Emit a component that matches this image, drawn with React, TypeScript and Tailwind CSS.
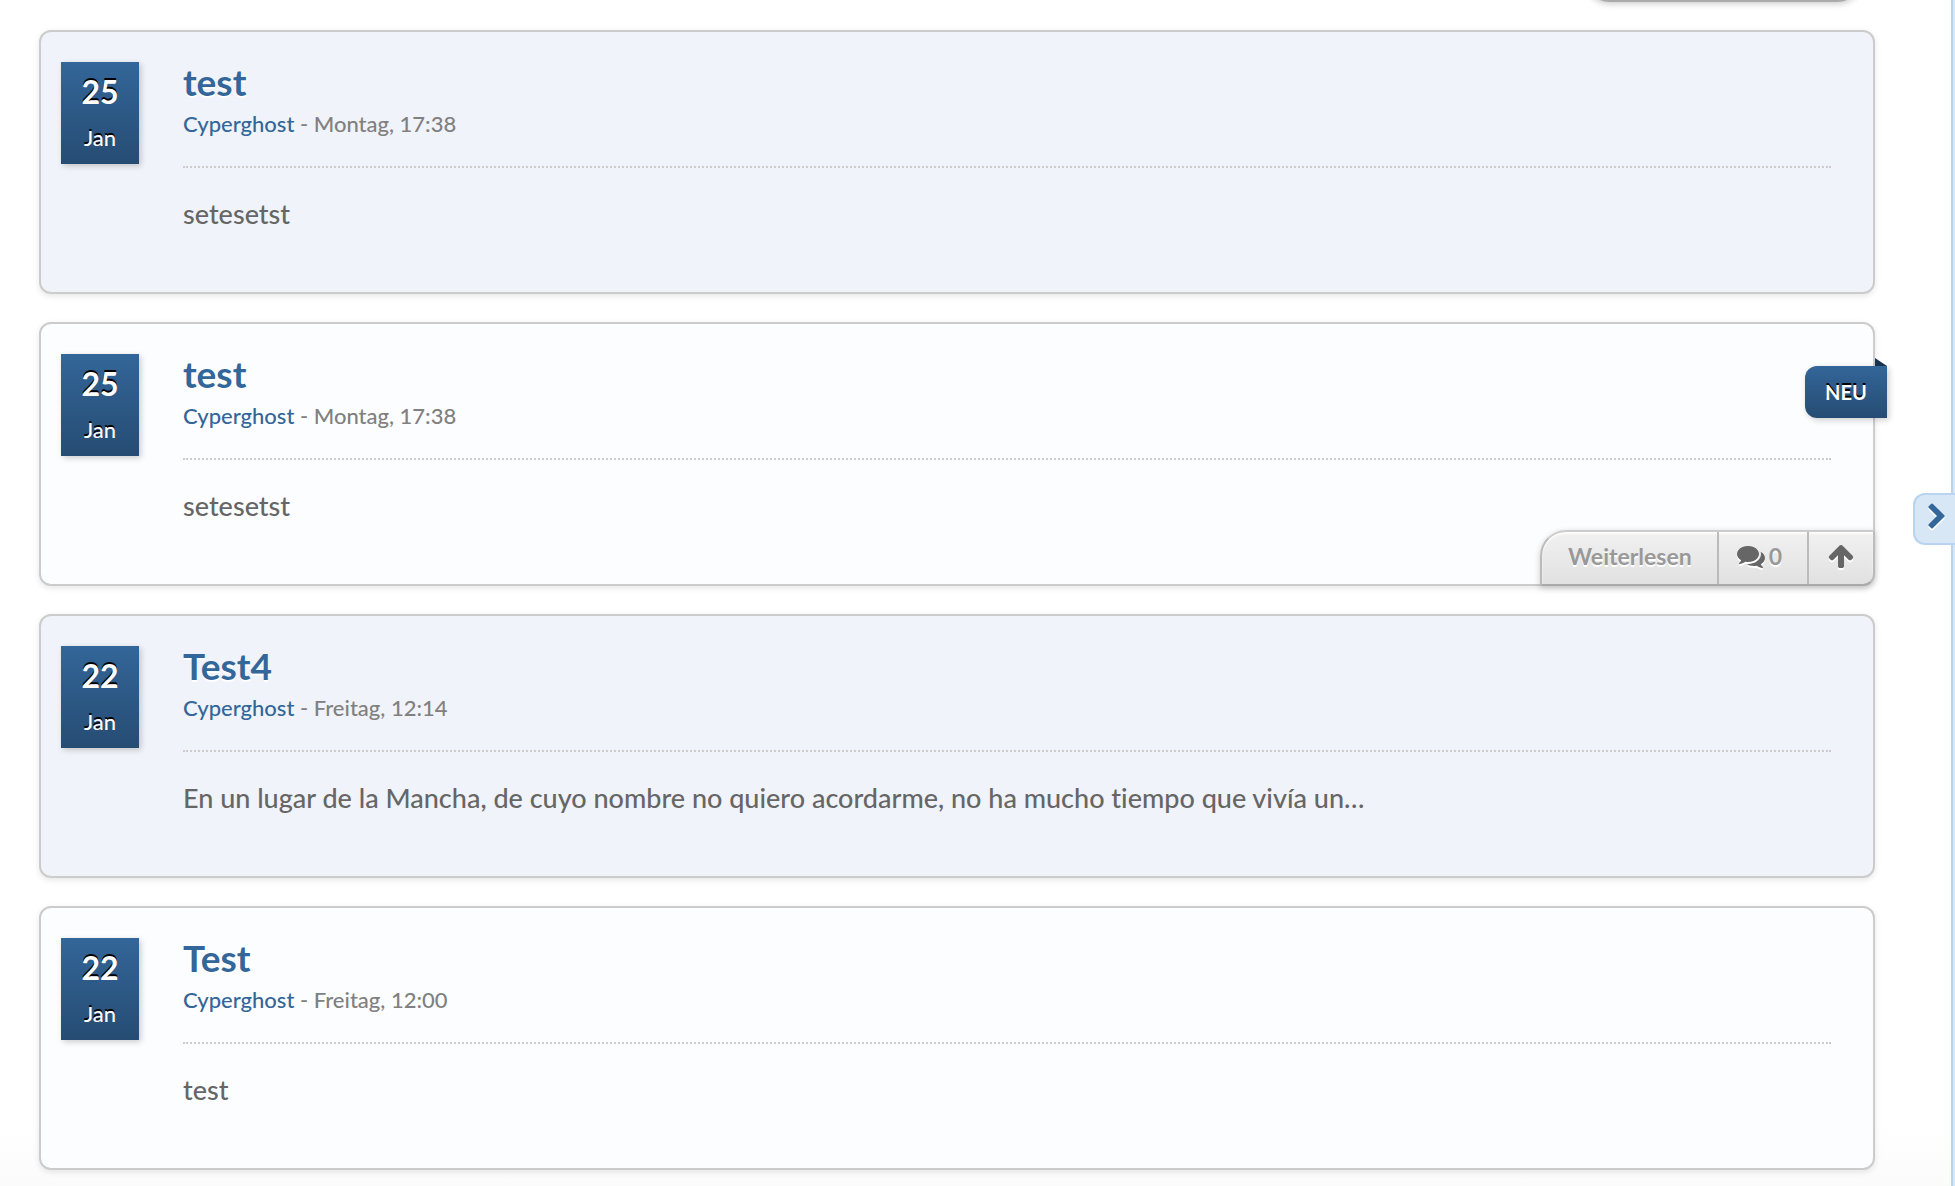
import type { ReactNode } from "react";

type Post = {
  id: number;
  day: string;
  month: string;
  title: string;
  author: string;
  date: string;
  text: string;
  isNew?: boolean;
};

const posts: Post[] = [
  { id: 1, day: "25", month: "Jan", title: "test", author: "Cyperghost", date: "Montag, 17:38", text: "setesetst" },
  { id: 2, day: "25", month: "Jan", title: "test", author: "Cyperghost", date: "Montag, 17:38", text: "setesetst", isNew: true },
  {
    id: 3,
    day: "22",
    month: "Jan",
    title: "Test4",
    author: "Cyperghost",
    date: "Freitag, 12:14",
    text: "En un lugar de la Mancha, de cuyo nombre no quiero acordarme, no ha mucho tiempo que vivía un…",
  },
  { id: 4, day: "22", month: "Jan", title: "Test", author: "Cyperghost", date: "Freitag, 12:00", text: "test" },
];

function Icon({ children }: { children: ReactNode }) {
  return (
    <svg
      viewBox="0 0 1792 1792"
      className="size-7 shrink-0 fill-current drop-shadow-[0_2px_0_#ffffff]"
      aria-hidden="true"
    >
      {children}
    </svg>
  );
}

function CommentsIcon() {
  return (
    <Icon>
      <path d="M1408 768q0 139-94 257t-256.5 186.5-353.5 68.5q-86 0-176-16-124 88-278 128-36 9-86 16h-3q-11 0-20.5-8t-11.5-21q-1-3-1-6.5t.5-6.5 2-6l2.5-5 3.5-5.5 4-5 4.5-5 4-4.5q5-6 23-25t26-29.5 22.5-29 25-38.5 20.5-44q-124-72-195-177t-71-224q0-139 94-257t256.5-186.5 353.5-68.5 353.5 68.5 256.5 186.5 94 257zm384 256q0 120-71 224.5t-195 176.5q10 24 20.5 44t25 38.5 22.5 29 26 29.5 23 25q1 1 4 4.5t4.5 5 4 5 3.5 5.5l2.5 5 2 6 .5 6.5-1 6.5q-3 14-13 22t-22 7q-50-7-86-16-154-40-278-128-90 16-176 16-271 0-472-132 58 4 88 4 161 0 309-45t264-129q125-92 192-212t67-254q0-77-23-152 129 71 204 178t75 230z" />
    </Icon>
  );
}

function ArrowUpIcon() {
  return (
    <Icon>
      <path d="M1675 971q0 51-37 90l-75 75q-38 38-91 38-54 0-90-38l-294-293v704q0 52-37.5 84.5t-90.5 32.5h-128q-53 0-90.5-32.5t-37.5-84.5v-704l-294 293q-36 38-90 38t-90-38l-75-75q-38-38-38-90 0-53 38-91l651-651q35-37 90-37 54 0 91 37l651 651q37 39 37 91z" />
    </Icon>
  );
}

function ChevronRightIcon() {
  return (
    <Icon>
      <path d="M1363 877l-742 742q-19 19-45 19t-45-19l-166-166q-19-19-19-45t19-45l531-531-531-531q-19-19-19-45t19-45l166-166q19-19 45-19t45 19l742 742q19 19 19 45t-19 45z" />
    </Icon>
  );
}

function DateBox({ day, month }: { day: string; month: string }) {
  return (
    <time className="flex h-[102px] w-[78px] shrink-0 flex-col items-center bg-linear-to-b from-[#336699] to-[#264c73] pt-1.5 text-white shadow-[2px_2px_6px_rgba(0,0,0,0.2)] [text-shadow:0_-2px_0_#000000]">
      <span className="text-[32px] leading-12 font-bold">{day}</span>
      <span className="text-[22px] leading-11 font-medium">{month}</span>
    </time>
  );
}

function NewBadge() {
  return (
    <span className="absolute top-[42px] -right-3.5 flex h-[52px] w-[82px] items-center justify-center rounded-l-xl bg-linear-to-b from-[#336699] to-[#264c73] text-xl font-bold text-white shadow-[2px_2px_6px_rgba(0,0,0,0.2)] [text-shadow:0_-2px_0_#000000]">
      NEU
      <svg viewBox="0 0 12 8" className="absolute right-0 bottom-full h-2 w-3 fill-[#19334d]" aria-hidden="true">
        <path d="M0 0L12 8H0z" />
      </svg>
    </span>
  );
}

function ActionBar() {
  return (
    <div className="absolute -right-0.5 -bottom-0.5 flex h-14 overflow-hidden rounded-tl-[26px] rounded-br-xl border-2 border-t-[#cccccc] border-r-[#bbbbbb] border-b-[#aaaaaa] border-l-[#bbbbbb] bg-linear-to-b from-[#f1f1f1] to-[#e1e1e1] text-[23px] font-bold text-[#999999] shadow-[0_2px_6px_rgba(0,0,0,0.2),inset_0_2px_2px_rgba(255,255,255,0.8)] [text-shadow:0_2px_0_#ffffff]">
      <a href="#weiterlesen" className="flex items-center pr-[25px] pb-1 pl-[26px]">
        Weiterlesen
      </a>
      <a
        href="#kommentare"
        aria-label="0 Kommentare"
        className="flex items-center gap-1 border-l-2 border-[#bbbbbb] pr-[25px] pb-1 pl-[18px]"
      >
        <span className="text-[#666666]">
          <CommentsIcon />
        </span>
        0
      </a>
      <button
        type="button"
        aria-label="Nach oben"
        className="flex items-center border-l-2 border-[#bbbbbb] px-[18px] pb-1 text-[#666666]"
      >
        <ArrowUpIcon />
      </button>
    </div>
  );
}

function PostCard({ post }: { post: Post }) {
  return (
    <article className="relative flex gap-11 rounded-xl border-2 border-[#cccccc] bg-[#f0f3f9] pt-[30px] pr-[42px] pb-[58px] pl-5 shadow-[0_2px_6px_rgba(0,0,0,0.1)] even:bg-[#fcfdff]">
      <DateBox day={post.day} month={post.month} />
      <div className="min-w-0 flex-1">
        <header className="border-b-2 border-dotted border-[#cccccc] pb-6.5">
          <h2 className="text-[37px] leading-10 font-bold text-[#336699] [text-shadow:0_2px_0_#ffffff]">
            <a href={`#post-${post.id}`}>{post.title}</a>
          </h2>
          <p className="mt-1.5 text-[22px] leading-8 font-medium text-[#808080]">
            <a href="#author" className="text-[#336699]">
              {post.author}
            </a>{" "}
            - {post.date}
          </p>
        </header>
        <p className="mt-6.5 text-[27px] leading-10 font-medium text-[#666666]">{post.text}</p>
      </div>
      {post.isNew && (
        <>
          <NewBadge />
          <ActionBar />
        </>
      )}
    </article>
  );
}

export default function App() {
  return (
    <div className="relative flex min-h-screen overflow-hidden bg-linear-to-b from-white from-95% to-[#fbfbfb] font-['Lato',sans-serif] [font-variant-ligatures:none]">
      <main className="min-w-0 flex-1 pr-[76px] pb-4 pl-[39px]">
        <div className="flex h-0.5 items-end justify-end pr-3">
          <div className="h-14 w-[279px] shrink-0 rounded-[26px] border-2 border-[#aaaaaa] bg-[#e1e1e1] shadow-[0_2px_6px_rgba(0,0,0,0.2)]" />
        </div>
        <div className="mt-7 flex flex-col gap-7">
          {posts.map((post) => (
            <PostCard key={post.id} post={post} />
          ))}
        </div>
      </main>
      <aside className="w-1 shrink-0 border-l-2 border-[#b8d4f0] bg-[#d8e7f5]" />
      <button
        type="button"
        aria-label="Seitenleiste ausblenden"
        className="absolute top-[493px] right-0 flex h-[52px] w-[42px] items-center rounded-l-xl border-2 border-r-0 border-[#b8d4f0] bg-[#d8e7f5] pb-1 pl-2 text-[#336699]"
      >
        <ChevronRightIcon />
      </button>
    </div>
  );
}
